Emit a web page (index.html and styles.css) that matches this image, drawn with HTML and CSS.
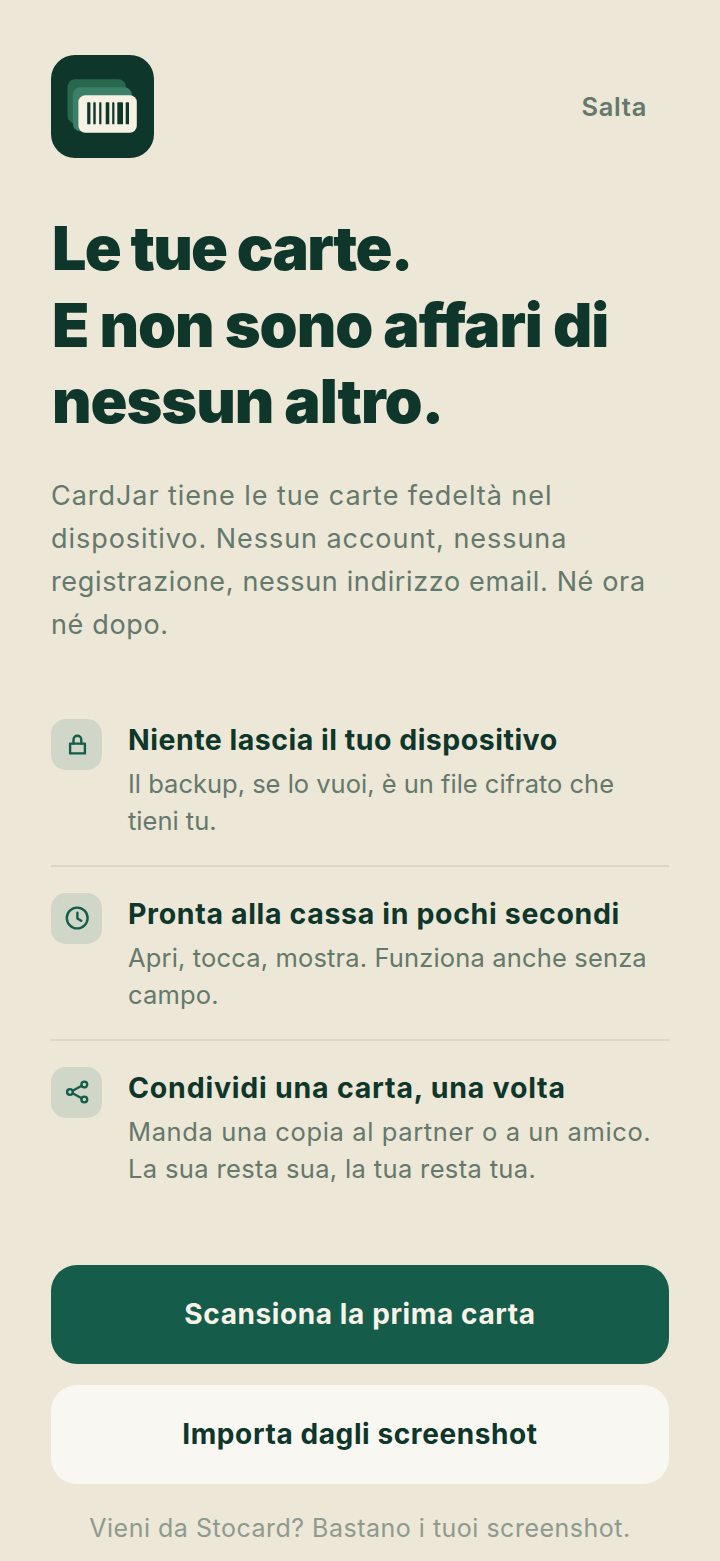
FILE: index.html
```html
<!DOCTYPE html>
<html lang="it">
<head>
<meta charset="utf-8">
<title>CardJar</title>
<link rel="stylesheet" href="styles.css">
</head>
<body>
<main class="screen">
  <header class="top">
    <div class="logo">
      <svg viewBox="0 0 103 103" width="103" height="103" aria-hidden="true">
        <rect x="16.5" y="24.3" width="58.5" height="44" rx="7.5" fill="#27684f"/>
        <rect x="21.8" y="32.3" width="59" height="44" rx="7.5" fill="#3c7f68"/>
        <rect x="27.4" y="40.2" width="58.4" height="37.5" rx="7" fill="#f7f1e3"/>
        <g fill="#0e362a">
          <rect x="36.2" y="47.3" width="3.2" height="22" rx="0.6"/>
          <rect x="42.3" y="47.3" width="2.4" height="22" rx="0.6"/>
          <rect x="48.2" y="47.3" width="2.2" height="22" rx="0.6"/>
          <rect x="54.7" y="47.3" width="3.6" height="22" rx="0.6"/>
          <rect x="61.2" y="47.3" width="2.2" height="22" rx="0.6"/>
          <rect x="66.3" y="47.3" width="5.7" height="22" rx="0.6"/>
          <rect x="74.7" y="47.3" width="3.3" height="22" rx="0.6"/>
        </g>
      </svg>
    </div>
    <a class="skip">Salta</a>
  </header>

  <h1 class="title"><span class="title-first">Le tue carte.</span><br>E non sono affari di<br>nessun altro.</h1>

  <p class="lead"><span class="lead-wide">CardJar tiene le tue carte fedeltà nel<br>dispositivo. Nessun account, nessuna</span><br>registrazione, nessun indirizzo email. Né ora<br>né dopo.</p>

  <ul class="features">
    <li class="feature">
      <div class="badge">
        <svg viewBox="0 0 28 28" width="28" height="28" aria-hidden="true" class="ico"><path d="M7.1 13.6h14.8v9.8H7.1z"/><path d="M10.5 13.6V9.6a3.9 3.9 0 0 1 7.8 0v4"/></svg>
      </div>
      <div class="copy">
        <h2>Niente lascia il tuo dispositivo</h2>
        <p>Il backup, se lo vuoi, è un file cifrato che<br>tieni tu.</p>
      </div>
    </li>
    <li class="feature">
      <div class="badge">
        <svg viewBox="0 0 28 28" width="28" height="28" aria-hidden="true" class="ico"><circle cx="14.2" cy="14" r="10.4"/><path d="M14.4 8.8v5.6l3.8 2.4"/></svg>
      </div>
      <div class="copy">
        <h2>Pronta alla cassa in pochi secondi</h2>
        <p>Apri, tocca, mostra. Funziona anche senza<br>campo.</p>
      </div>
    </li>
    <li class="feature">
      <div class="badge">
        <svg viewBox="0 0 28 28" width="28" height="28" aria-hidden="true" class="ico"><circle cx="21.3" cy="6.5" r="2.9"/><circle cx="7" cy="14" r="2.9"/><circle cx="21.3" cy="21.5" r="2.9"/><path d="M9.6 12.7l9.1-4.9M9.6 15.3l9.1 4.9"/></svg>
      </div>
      <div class="copy">
        <h2>Condividi una carta, una volta</h2>
        <p>Manda una copia al partner o a un amico.<br><span class="copy-tight">La sua resta sua, la tua resta tua.</span></p>
      </div>
    </li>
  </ul>

  <div class="actions">
    <button class="btn primary">Scansiona la prima carta</button>
    <button class="btn secondary">Importa dagli screenshot</button>
  </div>
  <p class="foot">Vieni da Stocard? Bastano i tuoi screenshot.</p>
</main>
</body>
</html>
```
FILE: styles.css
```css
* { box-sizing: border-box; }
html, body { margin: 0; padding: 0; }
body {
  background: #ece7d7;
  font-family: "Inter", "Noto Sans", sans-serif;
  color: #0e362a;
}
.screen {
  width: 720px;
  height: 1561px;
  overflow: hidden;
  padding: 55px 51px 0;
}
.top {
  display: flex;
  justify-content: space-between;
  align-items: center;
  height: 103px;
}
.logo {
  width: 103px;
  height: 103px;
  border-radius: 24px;
  background: #0e362a;
  overflow: hidden;
}
.logo svg { display: block; }
.skip {
  margin-right: 22px;
  font-size: 25.5px;
  font-weight: 600;
  letter-spacing: 0.7px;
  color: #64786c;
}
.title {
  margin: 52px 0 0;
  padding-left: 1px;
  font-size: 61px;
  line-height: 76.5px;
  font-weight: 900;
  letter-spacing: -1.05px;
  white-space: nowrap;
}
.title-first { letter-spacing: -1.7px; }
.lead {
  margin: 34px 0 0;
  font-size: 27px;
  line-height: 43px;
  letter-spacing: 0.65px;
  color: #64786c;
  white-space: nowrap;
}
.lead-wide { letter-spacing: 0.95px; }
.features {
  list-style: none;
  margin: 73px 0 0;
  padding: 0;
}
.feature {
  display: flex;
  gap: 26px;
  padding: 26px 0;
  border-bottom: 2px solid #dbd7c7;
}
.feature:first-child { padding-top: 0; }
.feature:last-child { border-bottom: 0; padding-bottom: 0; }
.badge {
  flex: none;
  width: 51px;
  height: 51px;
  border-radius: 15px;
  background: #d0d6c8;
  display: flex;
  align-items: center;
  justify-content: center;
}
.ico {
  fill: none;
  stroke: #155c4a;
  stroke-width: 2.4;
  stroke-linecap: round;
  stroke-linejoin: round;
}
.copy h2 {
  margin: 3px 0 0;
  font-size: 28.5px;
  line-height: 36px;
  font-weight: 700;
  letter-spacing: 0.65px;
  white-space: nowrap;
}
.copy p {
  margin: 7px 0 0;
  font-size: 25.5px;
  line-height: 37px;
  letter-spacing: 0.62px;
  color: #64786c;
  white-space: nowrap;
}
.copy-tight { letter-spacing: 0.35px; }
.feature:nth-child(1) h2 { letter-spacing: 0.5px; }
.feature:nth-child(1) p { letter-spacing: 0; }
.feature:nth-child(2) p { letter-spacing: 0.15px; }
.feature:nth-child(3) h2 { letter-spacing: 0.78px; }
.actions {
  display: flex;
  flex-direction: column;
  gap: 21px;
  margin-top: 78px;
}
.btn {
  display: block;
  width: 100%;
  height: 99px;
  border: 0;
  border-radius: 26px;
  font: 700 28px "Inter", "Noto Sans", sans-serif;
  letter-spacing: 0.6px;
}
.primary { background: #155c4a; color: #f7f3e8; }
.secondary { background: #f8f7f2; color: #0e362a; }
.foot {
  margin: 27px 0 0;
  text-align: center;
  font-size: 25px;
  line-height: 34px;
  letter-spacing: 0.5px;
  color: #8f9a8e;
  white-space: nowrap;
}
```
